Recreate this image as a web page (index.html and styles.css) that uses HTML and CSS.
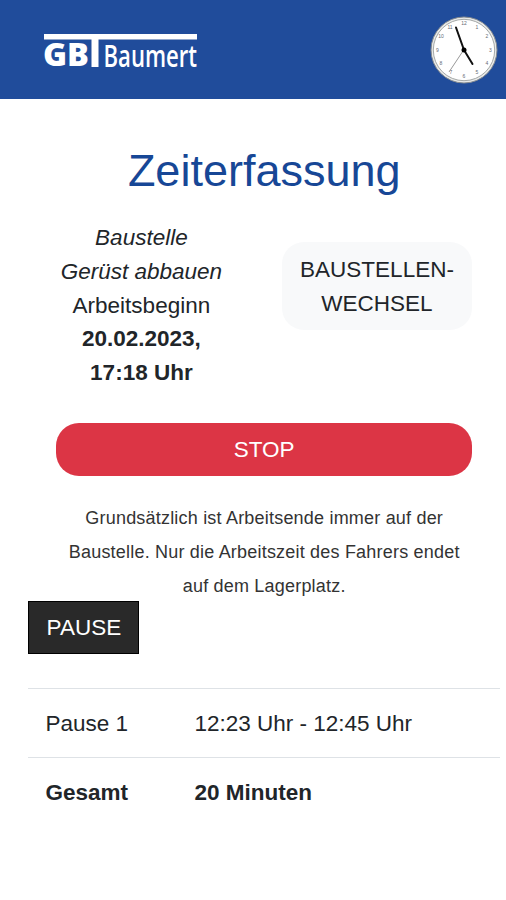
FILE: index.html
```html
<!DOCTYPE html>
<html lang="de">
<head>
<meta charset="utf-8">
<title>Zeiterfassung</title>
<link rel="stylesheet" href="styles.css">
</head>
<body>
<header class="header">
  <svg class="logo" viewBox="0 -8 220 60" role="img" aria-label="GBT Baumert">
    <path class="logo-bar" d="M4 6H157V11.5H58.5V39H51.5V11.5H4Z"/>
    <text class="logo-bold" x="3" y="38.3" textLength="46" lengthAdjust="spacingAndGlyphs">GB</text>
    <text class="logo-light" x="63.5" y="38.5" textLength="93.5" lengthAdjust="spacingAndGlyphs">Baumert</text>
  </svg>
  <svg class="clock" viewBox="-34 -34 68 68" aria-hidden="true">
    <circle class="clock-rim" r="33"/>
    <circle class="clock-face" r="30.7"/>
    <g class="clock-numbers">
      <text x="0" y="-25">12</text><text x="13" y="-21.5">1</text><text x="23" y="-12">2</text>
      <text x="26.5" y="1.5">3</text><text x="23" y="14.5">4</text><text x="13" y="24">5</text>
      <text x="0" y="28">6</text><text x="-13" y="24">7</text><text x="-23" y="14.5">8</text>
      <text x="-26.5" y="1.5">9</text><text x="-23" y="-12">10</text><text x="-14" y="-21.5">11</text>
    </g>
    <path class="second-hand" d="M1-2L-15 22"/>
    <path class="hand" d="M0 0L-8-22.5M0 0L8.5 14"/>
    <circle r="2.5"/>
  </svg>
</header>
<main class="page">
  <h1 class="title">Zeiterfassung</h1>
  <section class="work">
    <div class="site">
      <em>Baustelle<br>Gerüst abbauen</em><br>
      Arbeitsbeginn<br>
      <strong>20.02.2023,<br>17:18 Uhr</strong>
    </div>
    <button class="change">BAUSTELLEN-<br>WECHSEL</button>
  </section>
  <button class="stop">STOP</button>
  <p class="note">Grundsätzlich ist Arbeitsende immer auf der<br>Baustelle. Nur die Arbeitszeit des Fahrers endet<br>auf dem Lagerplatz.</p>
  <button class="pause">PAUSE</button>
  <table class="breaks">
    <tr><td class="label">Pause 1</td><td>12:23 Uhr - 12:45 Uhr</td></tr>
    <tr class="total"><td>Gesamt</td><td>20 Minuten</td></tr>
  </table>
</main>
</body>
</html>
```
FILE: styles.css
```css
* { box-sizing: border-box; }
body {
  margin: 0;
  background: #fff;
  color: #212529;
  font: 22.5px/33.75px "Liberation Sans", Arial, sans-serif;
}
button {
  display: block;
  border: 0;
  padding: 0;
  font: inherit;
}
.header {
  display: flex;
  justify-content: space-between;
  align-items: center;
  height: 99px;
  padding: 0 8px 0 40px;
  background: #204c9b;
}
.logo { width: 220px; height: 60px; }
.logo-bar, .logo-bold, .logo-light { fill: #fff; }
.logo-bold { font: 800 31px "Open Sans", sans-serif; }
.logo-light { font: 600 31.5px "Open Sans", sans-serif; }
.clock { width: 68px; height: 68px; }
.clock-rim { fill: #e8e9e8; stroke: #858b90; stroke-width: 1; }
.clock-face { fill: #fff; stroke: #a5a9a8; stroke-width: 1; }
.clock-numbers { fill: #666b75; font-size: 5px; text-anchor: middle; }
.hand { fill: none; stroke: #111; stroke-width: 2; stroke-linecap: round; }
.second-hand { stroke: #999; stroke-width: 1; }
.page { padding: 0 6px 0 28.4px; }
.title {
  margin: 45px 0 23px;
  color: #174796;
  font-size: 45px;
  line-height: 54px;
  font-weight: 400;
  text-align: center;
}
.work {
  display: flex;
  justify-content: space-between;
  margin: 0 28px;
}
.site { width: 170px; text-align: center; white-space: nowrap; }
.change {
  width: 190px;
  height: 88px;
  margin-top: 21px;
  padding-top: 1px;
  border-radius: 22px;
  background: #f8f9fa;
  color: #212529;
}
.stop {
  width: 415.6px;
  height: 53px;
  margin: 33px 28px 25px;
  padding-top: 2px;
  border-radius: 23px;
  background: #dc3545;
  color: #fff;
}
.note {
  margin: 0 0 -1.75px;
  color: #333;
  font-size: 18px;
  line-height: 34px;
  letter-spacing: 0.2px;
  text-align: center;
}
.pause {
  width: 111px;
  height: 53px;
  border: 1px solid #000;
  background: #292929;
  color: #fff;
}
.breaks {
  width: 100%;
  margin-top: 34px;
  border-collapse: collapse;
}
.breaks td { height: 69px; padding: 1px 17px 0; border-top: 1px solid #dee2e6; }
.breaks .label { width: 149px; }
.total { font-weight: 700; }
```
